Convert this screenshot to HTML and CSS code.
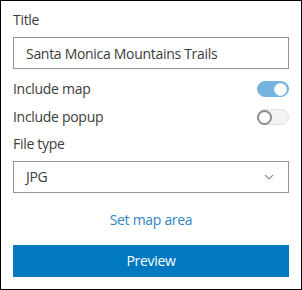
FILE: index.html
```html
<!DOCTYPE html>
<html>
<head>
  <title>Export</title>
  <link rel="stylesheet" href="styles.css">
</head>
<body>
  <div class="panel">
    <label class="field-label" for="title">Title</label>
    <input type="text" id="title" class="text-input" value="Santa Monica Mountains Trails" />

    <div class="switch-row">
      <span>Include map</span>
      <span class="switch switch-on"><span class="knob"></span></span>
    </div>
    <div class="switch-row">
      <span>Include popup</span>
      <span class="switch"><span class="knob"></span></span>
    </div>

    <label class="field-label file-type" for="file-type">File type</label>
    <div class="select-box" id="file-type">
      <span>JPG</span>
      <svg class="chevron" width="10" height="6" viewBox="0 0 10 6">
        <path d="M1 1 L5 5 L9 1" fill="none" stroke="#8a8a8a" stroke-width="1.1" />
      </svg>
    </div>

    <a class="map-area-link" href="#">Set map area</a>

    <button type="button" class="preview-button">Preview</button>
  </div>
</body>
</html>
```

FILE: styles.css
```css
html, body {
  margin: 0;
  background: #fff;
}

body {
  font-family: "Open Sans", sans-serif;
  font-size: 14px;
  line-height: 20px;
  letter-spacing: -0.3px;
  color: #3c3c3c;
}

.panel {
  box-sizing: border-box;
  width: 302px;
  height: 290px;
  border: 1px solid #000;
  padding: 9px 12px 12px 12px;
  display: flex;
  flex-direction: column;
}

.field-label {
  display: block;
  margin-bottom: 7px;
}

.file-type {
  margin-top: 3px;
}

.text-input,
.select-box {
  box-sizing: border-box;
  width: 100%;
  height: 32px;
  border: 1px solid #959595;
  padding: 0 12px;
  font: inherit;
  letter-spacing: inherit;
  color: #3c3c3c;
  background: #fff;
  outline: none;
}

.text-input {
  margin-bottom: 6px;
}

.select-box {
  display: flex;
  align-items: center;
  justify-content: space-between;
  padding-right: 14px;
}

.chevron {
  display: block;
}

.switch-row {
  height: 28px;
  display: flex;
  align-items: center;
  justify-content: space-between;
}

.switch {
  box-sizing: border-box;
  width: 32px;
  height: 16px;
  border-radius: 8px;
  background: #f3f3f3;
  border: 1px solid #e2e2e2;
  display: flex;
  align-items: center;
}

.knob {
  box-sizing: border-box;
  width: 15px;
  height: 15px;
  border-radius: 50%;
  background: #fff;
  border: 2px solid #8c8c8c;
  margin-left: -1px;
}

.switch-on {
  background: #74b4de;
  border-color: #74b4de;
  justify-content: flex-end;
}

.switch-on .knob {
  width: 13px;
  height: 13px;
  border: 1px solid #e6f1f8;
  margin: 0 1px 0 0;
}

.map-area-link {
  align-self: center;
  margin-top: 17px;
  color: #3384c4;
  text-decoration: none;
}

.preview-button {
  margin-top: 15px;
  height: 32px;
  border: none;
  background: #0079c1;
  color: #fff;
  font: inherit;
  letter-spacing: inherit;
  cursor: pointer;
}
```
